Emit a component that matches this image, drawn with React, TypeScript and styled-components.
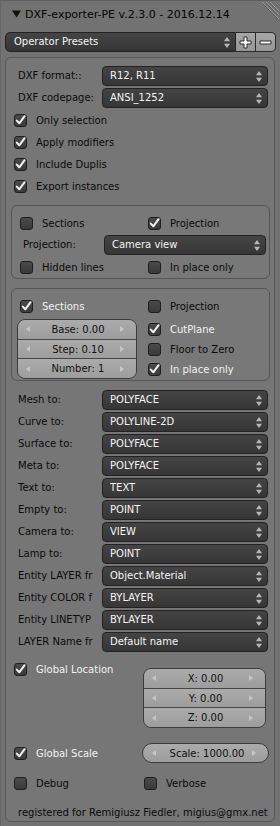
import React from 'react';
import styled, { createGlobalStyle } from 'styled-components';

const GlobalStyle = createGlobalStyle`
  html, body {
    margin: 0;
    padding: 0;
    background: #727272;
  }
  body {
    font-family: "DejaVu Sans", "Liberation Sans", sans-serif;
    font-size: 10px;
    color: #000;
  }
`;

const Panel = styled.div`
  width: 280px;
  height: 826px;
  box-sizing: border-box;
  background: #727272;
  border-top: 1px solid #5e5e5e;
  border-left: 1px solid #666;
  overflow: hidden;
`;

const Header = styled.div`
  height: 25px;
  display: flex;
  align-items: center;
  padding-left: 11px;
  gap: 4px;
`;

const Title = styled.span`
  font-size: 11px;
  color: #050505;
  padding-top: 1px;
`;

const DragCorner = styled.svg`
  margin-left: auto;
  align-self: flex-start;
`;

const PresetRow = styled.div`
  display: flex;
  height: 20px;
  margin: 6px 4px 0 4px;
`;

const Dropdown = styled.div`
  flex: 1;
  height: 20px;
  box-sizing: border-box;
  display: flex;
  align-items: center;
  padding: 0 5px 0 7px;
  border: 1px solid #222;
  border-radius: 4px;
  background: linear-gradient(#444, #363636);
  color: #f4f4f4;
`;

const PresetDropdown = styled(Dropdown)`
  border-radius: 5px 0 0 5px;
  padding-left: 8px;
`;

const DropText = styled.span`
  flex: 1;
  white-space: nowrap;
  line-height: 16px;
  overflow: hidden;
`;

const IconBtn = styled.div<{ $last?: boolean }>`
  width: 20px;
  height: 20px;
  box-sizing: border-box;
  display: flex;
  align-items: center;
  justify-content: center;
  border: 1px solid #2a2a2a;
  border-left: none;
  border-radius: ${(p) => (p.$last ? '0 5px 5px 0' : '0')};
  background: linear-gradient(#a6a6a6, #969696);
`;

const MainBox = styled.div`
  margin: 5px 5px 0 4px;
  border: 1px solid #585858;
  border-radius: 6px;
  background: #767676;
  padding: 8px 4px 0 5px;
  height: 765px;
  box-sizing: border-box;
`;

const Group = styled.div`
  display: flex;
  flex-direction: column;
  gap: 2px;
  padding: 0 2px 0 3px;
`;

const FieldRow = styled.div<{ $label?: number }>`
  display: grid;
  grid-template-columns: ${(p) => p.$label ?? 88}px 1fr;
  height: 20px;
  align-items: center;
`;

const Label = styled.span<{ $pad?: number }>`
  padding-left: ${(p) => p.$pad ?? 4}px;
  white-space: nowrap;
  overflow: hidden;
  line-height: 16px;
  color: #0a0a0a;
`;

const CheckRow = styled.div<{ $pad?: number }>`
  display: flex;
  align-items: center;
  gap: 9px;
  height: 20px;
  padding-left: ${(p) => p.$pad ?? 0}px;
`;

const CheckBox = styled.div`
  width: 13px;
  height: 13px;
  box-sizing: border-box;
  border: 1px solid #1e1e1e;
  border-radius: 3px;
  background: linear-gradient(#4a4a4a, #3a3a3a);
  display: flex;
  align-items: center;
  justify-content: center;
`;

const CheckText = styled.span<{ $light?: boolean }>`
  color: ${(p) => (p.$light ? '#f2f2f2' : '#0a0a0a')};
  white-space: nowrap;
`;

const SubBox = styled.div<{ $top: number }>`
  margin-top: ${(p) => p.$top}px;
  border: 1px solid #555;
  border-radius: 6px;
  background: #787878;
  padding: 7px 3px 1px 5px;
  display: flex;
  flex-direction: column;
  gap: 2px;
`;

const TwoCol = styled.div<{ $left?: number }>`
  display: grid;
  grid-template-columns: ${(p) => p.$left ?? 131}px 1fr;
  align-items: start;
`;

const Col = styled.div`
  display: flex;
  flex-direction: column;
`;

const Stack = styled.div<{ $mt?: number; $w?: number }>`
  margin-top: ${(p) => p.$mt ?? 0}px;
  width: ${(p) => (p.$w ? `${p.$w}px` : 'auto')};
  height: 60px;
  box-sizing: border-box;
  border: 1px solid #3c3c3c;
  border-radius: 8px;
  overflow: hidden;
  display: flex;
  flex-direction: column;
`;

const NumField = styled.div`
  flex: 1;
  display: grid;
  grid-template-columns: 10px 1fr 10px;
  align-items: center;
  padding: 0 6px 0 8px;
  background: linear-gradient(#ababab, #9d9d9d);
  color: #101010;
  text-align: center;
  & + & {
    border-top: 1px solid #454545;
  }
`;

const Pill = styled.div`
  height: 20px;
  box-sizing: border-box;
  border: 1px solid #3c3c3c;
  border-radius: 10px;
  background: linear-gradient(#ababab, #9d9d9d);
  display: grid;
  grid-template-columns: 10px 1fr 10px;
  align-items: center;
  padding: 0 6px 0 9px;
  text-align: center;
  color: #101010;
  margin-left: -2px;
  margin-right: -1px;
`;

const Footer = styled.div`
  margin-top: 10px;
  height: 19px;
  display: flex;
  align-items: center;
  padding-left: 7px;
  color: #0a0a0a;
  white-space: nowrap;
`;

const Spacer = styled.div<{ $h: number }>`
  height: ${(p) => p.$h}px;
`;

const UpDown = () => (
  <svg width="6" height="11" viewBox="0 0 6 11">
    <path d="M3 0 L6 4.3 L0 4.3 Z" fill="#b8b8b8" />
    <path d="M3 11 L6 6.7 L0 6.7 Z" fill="#b8b8b8" />
  </svg>
);

const Tick = () => (
  <svg width="11" height="11" viewBox="0 0 11 11">
    <path d="M1.8 5.6 L4.3 8.3 L9.6 1.2" fill="none" stroke="#f0f0f0" strokeWidth="2" strokeLinejoin="round" strokeLinecap="round" />
  </svg>
);

const Arrow = ({ right }: { right?: boolean }) => (
  <svg width="4" height="6" viewBox="0 0 4 6">
    <path d={right ? 'M0 0 L4 3 L0 6 Z' : 'M4 0 L0 3 L4 6 Z'} fill="#c6c6c6" />
  </svg>
);

const Select = ({ value }: { value: string }) => (
  <Dropdown>
    <DropText>{value}</DropText>
    <UpDown />
  </Dropdown>
);

const Check = ({ label, checked, light, pad }: { label: string; checked?: boolean; light?: boolean; pad?: number }) => (
  <CheckRow $pad={pad}>
    <CheckBox>{checked && <Tick />}</CheckBox>
    <CheckText $light={light}>{label}</CheckText>
  </CheckRow>
);

const Num = ({ text }: { text: string }) => (
  <NumField>
    <Arrow />
    <span>{text}</span>
    <Arrow right />
  </NumField>
);

const conversions: [string, string][] = [
  ['Mesh to:', 'POLYFACE'],
  ['Curve to:', 'POLYLINE-2D'],
  ['Surface to:', 'POLYFACE'],
  ['Meta to:', 'POLYFACE'],
  ['Text to:', 'TEXT'],
  ['Empty to:', 'POINT'],
  ['Camera to:', 'VIEW'],
  ['Lamp to:', 'POINT'],
  ['Entity LAYER fr', 'Object.Material'],
  ['Entity COLOR f', 'BYLAYER'],
  ['Entity LINETYP', 'BYLAYER'],
  ['LAYER Name fr', 'Default name'],
];

export default function App() {
  return (
    <Panel>
      <GlobalStyle />
      <Header>
        <svg width="9" height="8" viewBox="0 0 9 8">
          <path d="M0 0.5 L9 0.5 L4.5 7.5 Z" fill="#111" />
        </svg>
        <Title>DXF-exporter-PE v.2.3.0 - 2016.12.14</Title>
        <DragCorner width="24" height="24" viewBox="0 0 24 24">
          <g strokeWidth="1">
            <path d="M6 1 L23 18" stroke="#9c9c9c" />
            <path d="M6 2 L22 18" stroke="#5a5a5a" />
            <path d="M10 1 L23 14" stroke="#9c9c9c" />
            <path d="M10 2 L22 14" stroke="#5a5a5a" />
            <path d="M14 1 L23 10" stroke="#9c9c9c" />
            <path d="M14 2 L22 10" stroke="#5a5a5a" />
          </g>
        </DragCorner>
      </Header>

      <PresetRow>
        <PresetDropdown>
          <DropText>Operator Presets</DropText>
          <UpDown />
        </PresetDropdown>
        <IconBtn>
          <svg width="13" height="13" viewBox="0 0 13 13">
            <path d="M5 1 H8 V5 H12 V8 H8 V12 H5 V8 H1 V5 H5 Z" fill="#fafafa" stroke="#2a2a2a" strokeWidth="1" />
          </svg>
        </IconBtn>
        <IconBtn $last>
          <svg width="13" height="13" viewBox="0 0 13 13">
            <path d="M1 5 H12 V8 H1 Z" fill="#fafafa" stroke="#2a2a2a" strokeWidth="1" />
          </svg>
        </IconBtn>
      </PresetRow>

      <MainBox>
        <Group>
          <FieldRow>
            <Label>DXF format::</Label>
            <Select value="R12, R11" />
          </FieldRow>
          <FieldRow>
            <Label>DXF codepage:</Label>
            <Select value="ANSI_1252" />
          </FieldRow>
          <Check label="Only selection" checked />
          <Check label="Apply modifiers" checked />
          <Check label="Include Duplis" checked />
          <Check label="Export instances" checked />
        </Group>

        <SubBox $top={9}>
          <TwoCol>
            <Check label="Sections" pad={3} />
            <Check label="Projection" checked />
          </TwoCol>
          <FieldRow $label={87}>
            <Label $pad={6}>Projection:</Label>
            <Select value="Camera view" />
          </FieldRow>
          <TwoCol>
            <Check label="Hidden lines" pad={3} />
            <Check label="In place only" />
          </TwoCol>
        </SubBox>

        <SubBox $top={9}>
          <TwoCol $left={131}>
            <Col>
              <Check label="Sections" checked light pad={3} />
              <Stack $mt={3} $w={120}>
                <Num text="Base: 0.00" />
                <Num text="Step: 0.10" />
                <Num text="Number: 1" />
              </Stack>
            </Col>
            <Col>
              <Check label="Projection" />
              <Spacer $h={3} />
              <Check label="CutPlane" checked light />
              <Check label="Floor to Zero" />
              <Check label="In place only" checked light />
            </Col>
          </TwoCol>
        </SubBox>

        <Spacer $h={9} />
        <Group>
          {conversions.map(([label, value], i) => (
            <FieldRow key={i}>
              <Label>{label}</Label>
              <Select value={value} />
            </FieldRow>
          ))}
        </Group>

        <Spacer $h={7} />
        <Group>
          <TwoCol $left={129}>
            <Check label="Global Location" checked light />
            <Stack $mt={9} $w={123}>
              <Num text="X: 0.00" />
              <Num text="Y: 0.00" />
              <Num text="Z: 0.00" />
            </Stack>
          </TwoCol>
          <Spacer $h={11} />
          <TwoCol $left={130}>
            <Check label="Global Scale" checked light />
            <Pill>
              <Arrow />
              <span>Scale: 1000.00</span>
              <Arrow right />
            </Pill>
          </TwoCol>
          <Spacer $h={6} />
          <TwoCol $left={130}>
            <Check label="Debug" />
            <Check label="Verbose" />
          </TwoCol>
        </Group>
        <Footer>registered for Remigiusz Fiedler, migius@gmx.net</Footer>
      </MainBox>
    </Panel>
  );
}
